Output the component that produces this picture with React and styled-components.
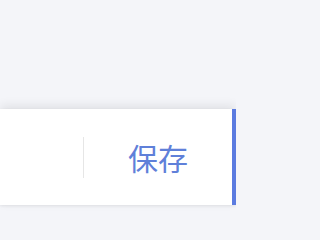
import styled, { createGlobalStyle } from "styled-components";

const GlobalStyle = createGlobalStyle`
  html, body {
    margin: 0;
    padding: 0;
    background: #f4f5f9;
    font-family: "Noto Sans CJK SC", "Noto Sans", sans-serif;
  }
`;

export default function App() {
  return (
    <>
      <GlobalStyle />
      <Page>
        <Footer>
          <Spacer />
          <Divider />
          <SaveButton type="button">保存</SaveButton>
          <Accent />
        </Footer>
      </Page>
    </>
  );
}

const Page = styled.div`
  width: 236px;
  height: 236px;
  padding-top: 109px;
  box-sizing: border-box;
  overflow: hidden;
`;

const Footer = styled.div`
  display: flex;
  align-items: center;
  height: 96px;
  background: #fff;
  box-shadow: 0 -3px 10px rgba(0, 0, 0, 0.09), 0 1px 3px rgba(0, 0, 0, 0.07);
`;

const Spacer = styled.div`
  width: 83px;
`;

const Divider = styled.div`
  width: 1px;
  height: 41px;
  background: #e6e6e6;
`;

const SaveButton = styled.button`
  flex: 1;
  height: 100%;
  border: none;
  background: transparent;
  padding: 0;
  font-family: inherit;
  font-size: 30px;
  color: #5f80d9;
  cursor: pointer;
`;

const Accent = styled.div`
  width: 4px;
  height: 100%;
  background: #5b7be0;
`;
